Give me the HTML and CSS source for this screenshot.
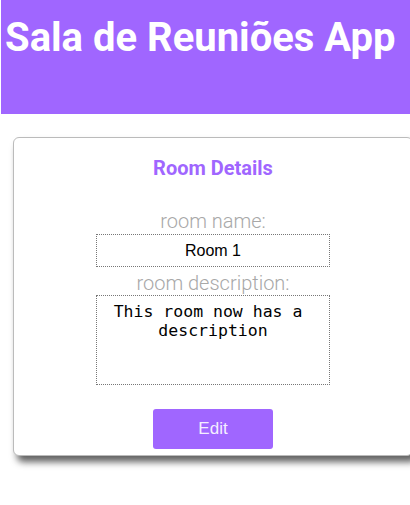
FILE: index.html
```html
<!DOCTYPE html>
<html>
<head>
<meta charset="utf-8">
<link rel="stylesheet" href="styles.css">
</head>
<body>
<header class="app-header">
  <h1 class="app-title">Sala de Reuniões App</h1>
</header>
<main class="content">
  <section class="card">
    <h2 class="card-title">Room Details</h2>
    <form class="room-form">
      <label class="field-label" for="room-name">room name:</label>
      <input class="field-input" id="room-name" type="text" value="Room 1">
      <label class="field-label" for="room-desc">room description:</label>
      <textarea class="field-area" id="room-desc">This room now has a description</textarea>
      <button class="edit-btn" type="button">Edit</button>
    </form>
  </section>
</main>
</body>
</html>
```

FILE: styles.css
```css
html, body {
  margin: 0;
  padding: 0;
  background: #fff;
  overflow: hidden;
}
body {
  width: 410px;
  height: 505px;
  font-family: Roboto, "Liberation Sans", sans-serif;
}
.app-header {
  background: #a066ff;
  height: 114px;
  margin-left: 1px;
  padding: 0 0 0 4px;
  box-sizing: border-box;
}
.app-title {
  margin: 0;
  padding-top: 16px;
  font-family: Roboto, sans-serif;
  font-weight: 700;
  font-size: 40px;
  line-height: 44px;
  color: #fff;
  white-space: nowrap;
}
.content {
  padding: 23px 0 0 13px;
}
.card {
  width: 400px;
  height: 319px;
  box-sizing: border-box;
  border: 1px solid #bbb;
  border-radius: 6px;
  background: #fff;
  box-shadow: 4px 6px 7px rgba(0, 0, 0, 0.62);
  padding-top: 18px;
}
.card-title {
  margin: 0;
  text-align: center;
  font-family: Roboto, sans-serif;
  font-weight: 700;
  font-size: 20px;
  line-height: 24px;
  color: #a066ff;
}
.room-form {
  display: flex;
  flex-direction: column;
  align-items: center;
  margin-top: 30px;
}
.field-label {
  font-family: Roboto, sans-serif;
  font-weight: 300;
  font-size: 20px;
  line-height: 23px;
  color: #a8a8a8;
}
.field-input {
  width: 234px;
  height: 33px;
  box-sizing: border-box;
  border: 1px dotted #777;
  font-family: "Liberation Sans", Arial, sans-serif;
  font-size: 16px;
  text-align: center;
  color: #000;
  padding: 0;
  margin: 1px 0 5px;
}
.field-area {
  width: 234px;
  height: 90px;
  box-sizing: border-box;
  border: 1px dotted #777;
  font-family: "DejaVu Sans Mono", monospace;
  font-size: 16.5px;
  line-height: 18.5px;
  text-align: center;
  white-space: break-spaces;
  color: #000;
  padding: 7px 8px;
  margin: 0;
  resize: none;
}
.edit-btn {
  margin-top: 24px;
  width: 120px;
  height: 40px;
  border: none;
  border-radius: 3px;
  background: #a066ff;
  color: #f4eeff;
  font-family: "Liberation Sans", Arial, sans-serif;
  font-size: 17px;
}
```
